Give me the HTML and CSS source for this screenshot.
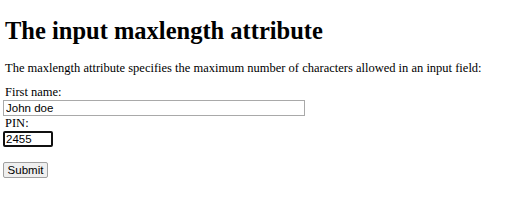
FILE: index.html
```html
<!DOCTYPE html>
<html lang="en">
<head>
    <meta charset="UTF-8">
    <title>The input maxlength attribute</title>
    <link rel="stylesheet" href="styles.css">
</head>
<body>
    <h1>The input maxlength attribute</h1>
    <p>The maxlength attribute specifies the maximum number of characters allowed in an input field:</p>
    <form class="pin-form">
        <label for="fname">First name:</label>
        <input type="text" id="fname" class="field field-wide" value="John doe">
        <label for="pin">PIN:</label>
        <input type="text" id="pin" class="field field-pin" maxlength="4" value="2455">
        <button type="submit" class="submit-btn">Submit</button>
    </form>
</body>
</html>
```

FILE: styles.css
```css
body {
    margin: 0;
    padding: 0 3px;
    font-family: "Liberation Serif", "Times New Roman", serif;
    font-size: 12.5px;
    color: #000;
    background: #fff;
}

h1 {
    margin: 16px 0 0;
    font-size: 24.5px;
    line-height: 30px;
    font-weight: bold;
    padding-left: 2px;
}

p {
    margin: 15px 0 0;
    line-height: 15px;
    padding-left: 2px;
}

.pin-form {
    display: flex;
    flex-direction: column;
    align-items: flex-start;
    margin-top: 9px;
}

label {
    line-height: 15px;
    padding-left: 2px;
}

.field {
    box-sizing: border-box;
    height: 16px;
    margin: 0;
    padding: 0 2px;
    font-family: "Liberation Sans", Arial, sans-serif;
    font-size: 11.5px;
    color: #000;
    border: 1px solid #a9a9a9;
    border-radius: 0;
    outline: none;
}

.field-wide {
    width: 302px;
}

.field-pin {
    width: 50px;
    border: 2px solid #101010;
    border-radius: 2px;
    padding: 0 1px;
}

.submit-btn {
    box-sizing: border-box;
    margin-top: 15px;
    height: 16px;
    width: 45px;
    padding: 0;
    font-family: "Liberation Sans", Arial, sans-serif;
    font-size: 11.5px;
    background: #efefef;
    border: 1px solid #a0a0a0;
    border-radius: 2px;
    color: #000;
}
```
